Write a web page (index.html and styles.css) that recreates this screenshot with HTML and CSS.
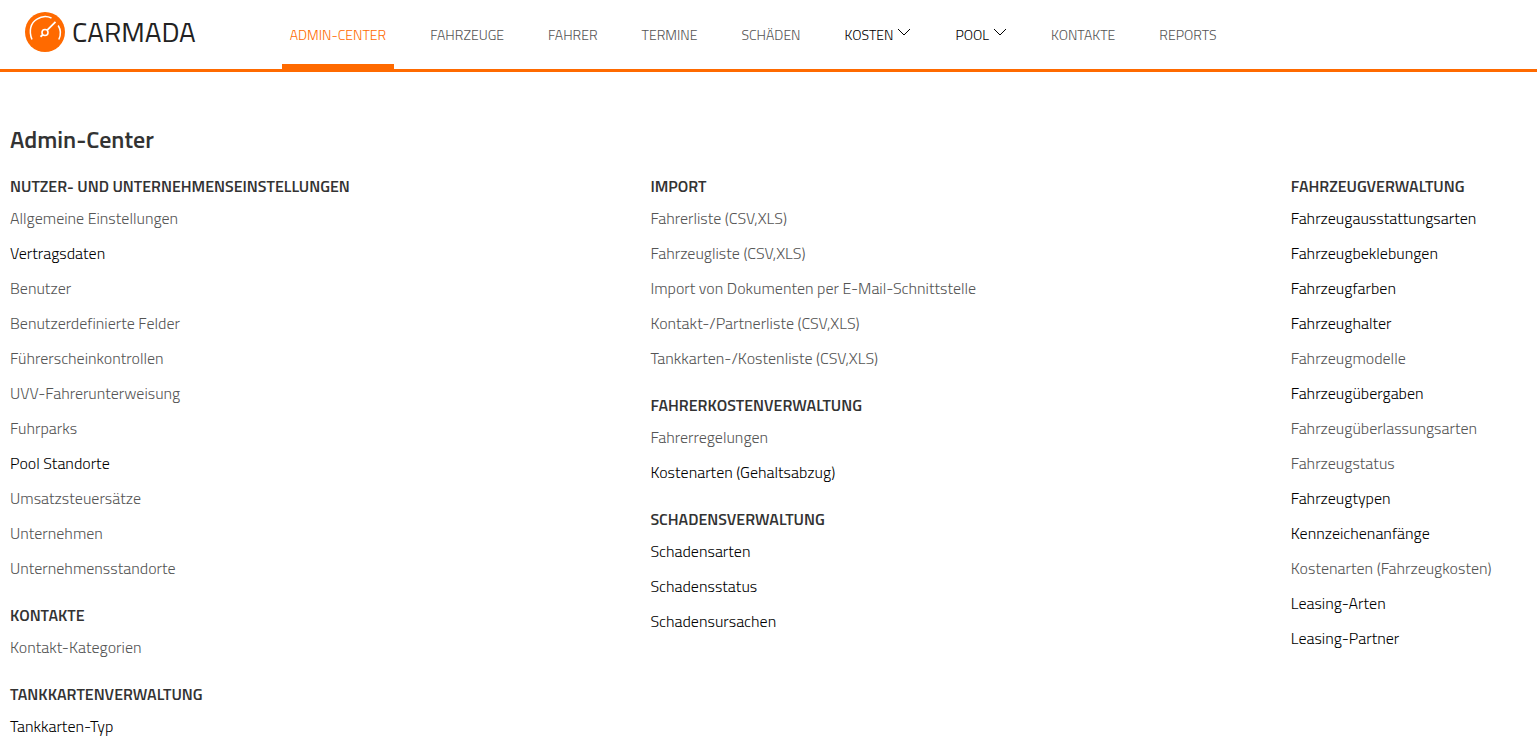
FILE: index.html
```html
<!DOCTYPE html>
<html lang="de">
<head>
    <meta charset="UTF-8">
    <meta name="viewport" content="width=device-width, initial-scale=1.0">
    <title>Admin-Center - CARMADA</title>
    <link rel="stylesheet" href="styles.css">
</head>
<body>
    <header class="header">
        <a class="logo" href="#">
            <svg class="logo-icon" viewBox="0 0 40 40" fill="none" stroke="#fff" aria-hidden="true">
                <circle cx="20" cy="20" r="20" fill="#ff6a00" stroke="none"/>
                <path d="M7 27.500C3.500 19 5.500 11 12 7.200C16.500 4.200 22 4 26.500 6" stroke-width="1.500"/>
                <path d="M33.200 13.500C36 18 36 23 33.800 27.500" stroke-width="1.500"/>
                <circle cx="20" cy="20.500" r="3" stroke-width="1.600"/>
                <path d="M22.200 18.200L30.500 9.800M17.800 22.700L15.500 24.700" stroke-width="1.800"/>
            </svg>
            <span class="logo-text">CARMADA</span>
        </a>
        <nav class="nav">
            <a class="nav-link active" href="#">Admin-Center</a>
            <a class="nav-link" href="#">Fahrzeuge</a>
            <a class="nav-link" href="#">Fahrer</a>
            <a class="nav-link" href="#">Termine</a>
            <a class="nav-link" href="#">Schäden</a>
            <button class="nav-link dark" type="button">Kosten
                <svg class="arrow" viewBox="0 0 14 8" aria-hidden="true"><path d="M1 1l6 6l6-6"/></svg>
            </button>
            <button class="nav-link dark" type="button">Pool
                <svg class="arrow" viewBox="0 0 14 8" aria-hidden="true"><path d="M1 1l6 6l6-6"/></svg>
            </button>
            <a class="nav-link" href="#">Kontakte</a>
            <a class="nav-link" href="#">Reports</a>
        </nav>
    </header>

    <main class="content">
        <h1>Admin-Center</h1>
        <div class="columns">
            <div class="column">
                <h2>Nutzer- und Unternehmenseinstellungen</h2>
                <ul>
                    <li><a href="#">Allgemeine Einstellungen</a></li>
                    <li><a class="dark" href="#">Vertragsdaten</a></li>
                    <li><a href="#">Benutzer</a></li>
                    <li><a href="#">Benutzerdefinierte Felder</a></li>
                    <li><a href="#">Führerscheinkontrollen</a></li>
                    <li><a href="#">UVV-Fahrerunterweisung</a></li>
                    <li><a href="#">Fuhrparks</a></li>
                    <li><a class="dark" href="#">Pool Standorte</a></li>
                    <li><a href="#">Umsatzsteuersätze</a></li>
                    <li><a href="#">Unternehmen</a></li>
                    <li><a href="#">Unternehmensstandorte</a></li>
                </ul>
                <h2>Kontakte</h2>
                <ul>
                    <li><a href="#">Kontakt-Kategorien</a></li>
                </ul>
                <h2>Tankkartenverwaltung</h2>
                <ul>
                    <li><a class="dark" href="#">Tankkarten-Typ</a></li>
                </ul>
            </div>

            <div class="column">
                <h2>Import</h2>
                <ul>
                    <li><a href="#">Fahrerliste (CSV,XLS)</a></li>
                    <li><a href="#">Fahrzeugliste (CSV,XLS)</a></li>
                    <li><a href="#">Import von Dokumenten per E-Mail-Schnittstelle</a></li>
                    <li><a href="#">Kontakt-/Partnerliste (CSV,XLS)</a></li>
                    <li><a href="#">Tankkarten-/Kostenliste (CSV,XLS)</a></li>
                </ul>
                <h2>Fahrerkostenverwaltung</h2>
                <ul>
                    <li><a href="#">Fahrerregelungen</a></li>
                    <li><a class="dark" href="#">Kostenarten (Gehaltsabzug)</a></li>
                </ul>
                <h2>Schadensverwaltung</h2>
                <ul>
                    <li><a class="dark" href="#">Schadensarten</a></li>
                    <li><a class="dark" href="#">Schadensstatus</a></li>
                    <li><a class="dark" href="#">Schadensursachen</a></li>
                </ul>
            </div>

            <div class="column">
                <h2>Fahrzeugverwaltung</h2>
                <ul>
                    <li><a class="dark" href="#">Fahrzeugausstattungsarten</a></li>
                    <li><a class="dark" href="#">Fahrzeugbeklebungen</a></li>
                    <li><a class="dark" href="#">Fahrzeugfarben</a></li>
                    <li><a class="dark" href="#">Fahrzeughalter</a></li>
                    <li><a href="#">Fahrzeugmodelle</a></li>
                    <li><a class="dark" href="#">Fahrzeugübergaben</a></li>
                    <li><a href="#">Fahrzeugüberlassungsarten</a></li>
                    <li><a href="#">Fahrzeugstatus</a></li>
                    <li><a class="dark" href="#">Fahrzeugtypen</a></li>
                    <li><a class="dark" href="#">Kennzeichenanfänge</a></li>
                    <li><a href="#">Kostenarten (Fahrzeugkosten)</a></li>
                    <li><a class="dark" href="#">Leasing-Arten</a></li>
                    <li><a class="dark" href="#">Leasing-Partner</a></li>
                </ul>
            </div>
        </div>
    </main>
</body>
</html>
```
FILE: styles.css
```css
* {
    box-sizing: border-box;
}
body {
    margin: 0;
    font-family: "Titillium Web", Roboto, sans-serif;
    font-size: 16px;
    color: #333;
    background-color: #fff;
}
a {
    color: #555;
    text-decoration: none;
}

/* header */
.header {
    display: flex;
    gap: 86px;
    padding-left: 25px;
    border-bottom: 3px solid #ff6a00;
}
.logo {
    display: flex;
    align-items: center;
    gap: 7px;
    height: 69px;
    padding-bottom: 5px;
    color: #222;
    font-size: 28px;
}
.logo-icon {
    width: 40px;
    height: 40px;
}
.logo-text {
    padding-bottom: 2px;
}
.nav {
    display: flex;
    gap: 28px;
}
.nav-link {
    display: flex;
    align-items: center;
    gap: 4px;
    padding: 4px 8px 0;
    border: none;
    border-bottom: 5px solid transparent;
    background: none;
    color: #555;
    font-family: inherit;
    font-size: 14px;
    font-weight: 300;
    text-transform: uppercase;
    cursor: pointer;
}
.nav-link.active {
    color: #ff6a00;
    border-bottom-color: #ff6a00;
}
.arrow {
    width: 14px;
    height: 8px;
    margin-bottom: 4px;
    fill: none;
    stroke: currentColor;
}

/* overview */
.content {
    padding-top: 49px;
}
h1 {
    margin: 0;
    padding: 0 10px;
    font-size: 24px;
    font-weight: 600;
    line-height: 36px;
}
.columns {
    display: grid;
    grid-template-columns: 5fr 5fr 2fr;
    padding-top: 15px;
}
.column {
    min-width: 0;
    padding: 0 10px;
}
h2 {
    margin: 0;
    font-size: 16px;
    font-weight: 600;
    line-height: 29px;
    text-transform: uppercase;
}
ul {
    margin: 0 0 15px;
    padding: 0;
    list-style: none;
}
ul:last-child {
    margin-bottom: 0;
}
li {
    line-height: 35px;
}
li a {
    font-weight: 300;
}
.nav .dark,
li .dark {
    color: #000;
}
```
